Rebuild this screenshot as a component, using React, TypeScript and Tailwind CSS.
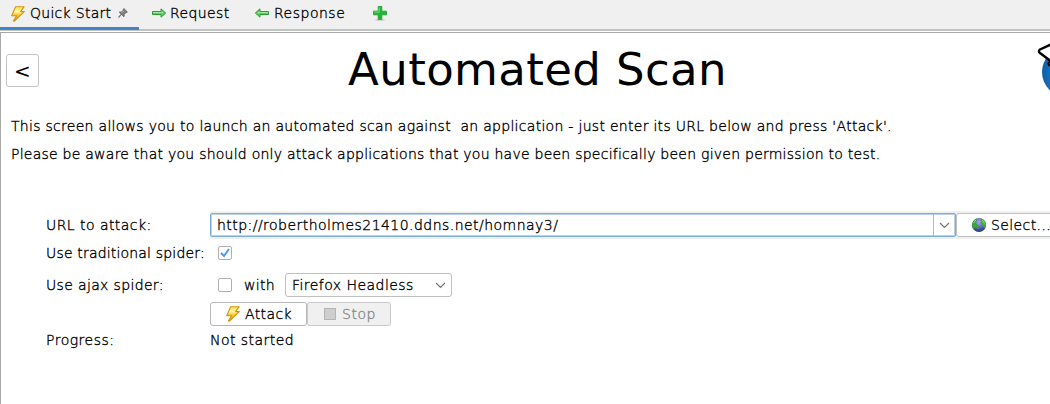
import type { ReactNode } from "react";

function Bolt() {
  return (
    <svg width="16" height="16" viewBox="0 0 16 16" className="shrink-0">
      <defs>
        <linearGradient id="bolt" x1="0" y1="0" x2="0" y2="1">
          <stop offset="0" stopColor="#ffe84a" />
          <stop offset=".35" stopColor="#fff3b4" />
          <stop offset=".55" stopColor="#f8cc2a" />
          <stop offset="1" stopColor="#e09c00" />
        </linearGradient>
      </defs>
      <path d="M5.6 .7H14.2L10.6 5.6H14.3L4.4 15.2L3.4 15L6.6 9.7H1.7Z" fill="url(#bolt)" stroke="#cf9412" strokeWidth="1.1" strokeLinejoin="round" />
    </svg>
  );
}

function Arrow({ left = false }: { left?: boolean }) {
  return (
    <svg width="16" height="16" viewBox="0 0 16 16" className={left ? "shrink-0 -scale-x-100" : "shrink-0"}>
      <path d="M1.5 6.5H10V3.8L14.7 8L10 12.2V9.5H1.5Z" fill="#62cf62" stroke="#2c9a37" strokeWidth="1" strokeLinejoin="round" />
      <path d="M2 7.5H12" stroke="#9deb9a" strokeWidth="1" />
    </svg>
  );
}

function Pin() {
  return (
    <svg width="10" height="10" viewBox="0 0 10 10" className="-mt-px shrink-0">
      <path d="M.5 9.5L3.5 6.2" stroke="#777" strokeWidth="1.2" />
      <path d="M5.8.5L9.4 4L8.2 4.6L7.4 4.9L6.2 6.7L6 8.8L1.2 4.1L3.3 3.9L5.2 2.6L5.3 1.4Z" fill="#808080" stroke="#5c5c5c" strokeWidth=".8" />
      <path d="M3.5 4.6L6 3.2" stroke="#aaa" />
    </svg>
  );
}

function Plus() {
  return (
    <svg width="16" height="16" viewBox="0 0 16 16" className="shrink-0">
      <ellipse cx="8" cy="14.9" rx="5" ry=".8" fill="#c9c9c9" />
      <path d="M6.2 1.5H9.8V6.2H14.5V9.8H9.8V14.4H6.2V9.8H1.5V6.2H6.2Z" fill="#1fb633" stroke="#33a53e" strokeWidth="1" strokeLinejoin="round" />
      <path d="M7.2 2.5V7.2H2.5" stroke="#75dc78" fill="none" />
    </svg>
  );
}

function Globe() {
  return (
    <svg width="16" height="16" viewBox="0 0 16 16" className="shrink-0">
      <defs>
        <radialGradient id="sea" cx=".5" cy=".3" r=".75">
          <stop offset="0" stopColor="#a4a8ee" />
          <stop offset=".55" stopColor="#5a5fba" />
          <stop offset="1" stopColor="#252b65" />
        </radialGradient>
      </defs>
      <circle cx="8" cy="8" r="7" fill="url(#sea)" />
      <path d="M1.2 8C1.3 5 3 2.4 5.6 1.5L6.3 3L4.8 5L5.6 7.2L8 9.6L7 12L5.4 11L3 10.5L3.8 13.4C2.2 12.2 1.2 10.3 1.2 8Z" fill="#38a830" />
      <path d="M9.5 1.2C12.5 1.8 14.6 4 15 7L14 11L12.5 10L11.5 7.5L9.3 6.5L10 4Z" fill="#3fb336" />
      <path d="M2.5 6L5 2.8M11.3 3.2L13.6 6.5" stroke="#8be568" strokeWidth="1" />
      <path d="M9 12L12 12L9 14.8Z" fill="#1b6d31" />
    </svg>
  );
}

function Chevron() {
  return (
    <svg width="11" height="7" viewBox="0 0 11 7" className="shrink-0">
      <path d="M1 1L5.5 5.5L10 1" fill="none" stroke="#747474" strokeWidth="1.2" />
    </svg>
  );
}

function Row({ label, labelClass = "", className, children }: { label: string; labelClass?: string; className: string; children: ReactNode }) {
  return (
    <div className={`flex items-center ${className}`}>
      <div className={`w-[164px] shrink-0 ${labelClass}`}>{label}</div>
      {children}
    </div>
  );
}

export default function App() {
  return (
    <div className="flex h-[404px] w-[1050px] flex-col overflow-hidden bg-white font-['DejaVu_Sans','Liberation_Sans',sans-serif] text-[14px] leading-[20px] font-extralight tracking-[0.28px] whitespace-pre text-black [-webkit-text-stroke-width:0.35px]">
      <div className="flex h-[31px] shrink-0 border-b-2 border-[#c0c4c0] bg-[#f0f0f0]">
        <div className="flex h-[30px] w-[139px] shrink-0 items-center border-b-[3px] border-[#4383c6] pl-[10px]">
          <Bolt />
          <span className="-mt-px ml-1 w-[88px]">Quick Start</span>
          <Pin />
        </div>
        <div className="flex h-[26px] items-center pl-3">
          <Arrow />
          <span className="ml-[3px] w-[84px] tracking-[0.4px]">Request</span>
          <Arrow left />
          <span className="ml-[4px] w-[98px] tracking-[0.5px]">Response</span>
          <Plus />
        </div>
      </div>
      <div className="mt-px flex grow flex-col border-t border-l border-[#a9a9a9]">
        <div className="flex h-[75px] shrink-0 items-center pl-[5px]">
          <button className="flex h-[33px] w-[33px] shrink-0 items-center justify-center rounded-[3px] border border-[#c4c4c4] text-[20px] font-normal [-webkit-text-stroke-width:0px]">
            {"<"}
          </button>
          <h1 className="w-[997px] shrink-0 pb-[2px] text-center text-[45px] leading-[50px] font-normal tracking-[0.38px] [-webkit-text-stroke-width:0px]">Automated Scan</h1>
          <svg width="15" height="60" viewBox="0 0 15 60" className="shrink-0">
            <defs>
              <linearGradient id="ball" x1="0" y1="0" x2="1" y2="0">
                <stop offset="0" stopColor="#0e5ca5" />
                <stop offset=".25" stopColor="#1b78c8" />
              </linearGradient>
            </defs>
            <circle cx="31" cy="31" r="25" fill="url(#ball)" />
            <path d="M16 3L4 8.5Q1.8 10 4 12L16 21" fill="#fff" stroke="#000" strokeWidth="2.4" />
            <path d="M16 19.5Q10.5 22 13.5 24.5L16 25" fill="none" stroke="#000" strokeWidth="2" />
          </svg>
        </div>
        <p className="mt-[8px] ml-[10px] h-7 tracking-[0.29px]">{"This screen allows you to launch an automated scan against  an application - just enter its URL below and press 'Attack'."}</p>
        <p className="ml-[10px] h-7 tracking-[0.245px]">Please be aware that you should only attack applications that you have been specifically been given permission to test.</p>
        <div className="mt-[39px] ml-[45px] flex flex-col">
          <Row label="URL to attack:" labelClass="tracking-[0.45px]" className="h-[28px]">
            <div className="flex h-[28px] w-[841px] shrink-0 items-center overflow-hidden bg-[#f0f0f0]">
              <div className="flex h-[24px] w-[746px] shrink-0 items-center rounded-[2px] border border-[#79abdc] bg-white shadow-[inset_0_0_0_1px_#b9d3ed]">
                <span className="grow pl-[6px] tracking-[0.46px]">http://robertholmes21410.ddns.net/homnay3/</span>
                <span className="flex h-full w-[22px] items-center justify-center border-l border-[#b8b8b8]"><Chevron /></span>
              </div>
              <button className="flex h-[24px] w-[110px] shrink-0 items-center rounded-[3px] border border-[#c0c0c0] bg-white pl-[14px] tracking-[0.4px]">
                <Globe /><span className="ml-[4px]">Select...</span>
              </button>
            </div>
          </Row>
          <Row label="Use traditional spider:" labelClass="tracking-[0.18px]" className="h-[28px]">
            <span className="ml-2 flex h-[14px] w-[14px] items-center justify-center rounded-[2px] border border-[#b0b0b0]">
              <svg width="10" height="10" viewBox="0 0 10 10"><path d="M1 5L4 8L9 1" fill="none" stroke="#4a9de3" strokeWidth="2" /></svg>
            </span>
          </Row>
          <Row label="Use ajax spider:" labelClass="tracking-[0.35px]" className="h-[36px]">
            <span className="ml-2 h-[14px] w-[14px] rounded-[2px] border border-[#b0b0b0]" />
            <span className="ml-3 w-[41px]">with</span>
            <div className="flex h-[24px] w-[167px] items-center justify-between rounded-[3px] border border-[#c0c0c0] pr-[5px] pl-[6px] tracking-[0.46px]">
              Firefox Headless<Chevron />
            </div>
          </Row>
          <Row label="" className="h-[22px]">
            <button className="flex h-[24px] w-[97px] items-center rounded-[3px] border border-[#b8b8b8] pl-[14px] tracking-[0.4px]">
              <Bolt /><span className="ml-1">Attack</span>
            </button>
            <button className="flex h-[24px] w-[84px] items-center rounded-[3px] border border-[#c9c9c9] bg-[#f0f0f0] pl-4 tracking-[0.5px] text-[#888]">
              <span className="h-3 w-3 border border-[#b4b4b4] bg-[#cecece]" /><span className="ml-[6px]">Stop</span>
            </button>
          </Row>
          <Row label="Progress:" labelClass="tracking-[0.5px]" className="h-[30px] tracking-[0.46px]">Not started</Row>
        </div>
      </div>
    </div>
  );
}
